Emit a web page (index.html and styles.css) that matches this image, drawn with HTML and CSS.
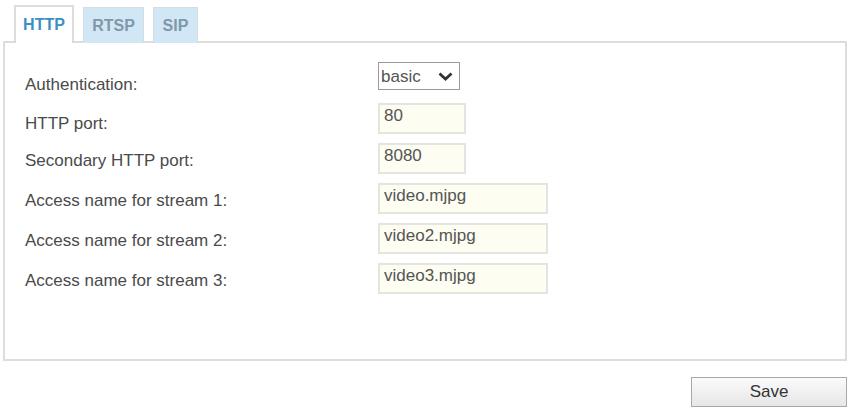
FILE: index.html
```html
<!DOCTYPE html>
<html lang="en">
<head>
    <meta charset="UTF-8">
    <meta name="viewport" content="width=device-width, initial-scale=1.0">
    <title>Network - HTTP</title>
    <link rel="stylesheet" href="styles.css">
</head>
<body>
    <div class="page">
        <div class="tabs">
            <a href="#" class="tab active">HTTP</a>
            <a href="#" class="tab">RTSP</a>
            <a href="#" class="tab">SIP</a>
        </div>

        <form class="panel">
            <div class="form-grid">
                <label class="label label-drop" for="auth">Authentication:</label>
                <div class="select-wrap">
                    <select id="auth" class="select">
                        <option>basic</option>
                        <option>digest</option>
                    </select>
                    <svg class="chevron" width="15" height="9" viewBox="0 0 15 9">
                        <path d="M1.5 1.5 L7.5 7 L13.5 1.5" fill="none" stroke="#333" stroke-width="2.8"/>
                    </svg>
                </div>

                <label class="label label-mid" for="port">HTTP port:</label>
                <input id="port" class="input short" type="text" value="80">

                <label class="label" for="port2">Secondary HTTP port:</label>
                <input id="port2" class="input short" type="text" value="8080">

                <label class="label" for="s1">Access name for stream 1:</label>
                <input id="s1" class="input" type="text" value="video.mjpg">

                <label class="label" for="s2">Access name for stream 2:</label>
                <input id="s2" class="input" type="text" value="video2.mjpg">

                <label class="label" for="s3">Access name for stream 3:</label>
                <input id="s3" class="input" type="text" value="video3.mjpg">
            </div>
        </form>

        <div class="actions">
            <button type="button" class="save-button">Save</button>
        </div>
    </div>
</body>
</html>
```

FILE: styles.css
```css
* {
    margin: 0;
    padding: 0;
    box-sizing: border-box;
}

body {
    font-family: 'Liberation Sans', Arial, sans-serif;
    color: #444;
    background: #fff;
}

.page {
    width: 844px;
    margin-left: 3px;
    padding-top: 7px;
}

/* tab strip */
.tabs {
    display: flex;
    gap: 9px;
    padding-left: 11px;
    margin-bottom: -2px;
}

.tab {
    display: flex;
    align-items: center;
    justify-content: center;
    height: 36px;
    padding: 0 8px;
    font-size: 16px;
    font-weight: bold;
    text-decoration: none;
    color: #7f98a9;
    background: #d2e7f6;
    border: 1px solid #d5dde3;
    border-bottom: none;
}

.tab.active {
    width: 60px;
    color: #3a91c1;
    background: #fff;
    border: 2px solid #ddd;
    border-bottom: none;
    position: relative;
    z-index: 1;
    height: 38px;
    margin-top: -2px;
}

.tab:nth-child(2) {
    width: 61px;
}

.tab:nth-child(3) {
    width: 45px;
}

/* settings panel */
.panel {
    border: 2px solid #ddd;
    padding: 19px 20px 0;
    height: 320px;
}

.form-grid {
    display: grid;
    grid-template-columns: 353px 1fr;
    grid-template-rows: 32px repeat(5, 31px);
    row-gap: 9px;
}

.label {
    display: flex;
    align-items: center;
    padding-top: 4px;
    font-size: 17px;
    color: #4a4a4a;
}

.label-drop {
    padding-top: 14px;
}

.label-mid {
    padding-top: 10px;
}

.select-wrap {
    position: relative;
    width: 82px;
    height: 28px;
}

.select {
    appearance: none;
    width: 100%;
    height: 100%;
    border: 1px solid #9a9a9a;
    background: #fff;
    font-family: inherit;
    font-size: 17px;
    color: #555;
    padding-left: 2px;
}

.chevron {
    position: absolute;
    right: 7px;
    top: 10px;
    pointer-events: none;
}

.input {
    width: 170px;
    height: 31px;
    border: 2px solid #e4e4e0;
    background: #fdfdf2;
    font-family: inherit;
    font-size: 17px;
    color: #555;
    padding: 0 4px 5px;
}

.input.short {
    width: 88px;
}

/* footer action */
.actions {
    display: flex;
    justify-content: flex-end;
    margin-top: 16px;
}

.save-button {
    width: 156px;
    height: 30px;
    border: 1px solid #a8a8a8;
    background: linear-gradient(#fbfbfb, #e6e6e6);
    font-family: inherit;
    font-size: 17px;
    color: #333;
}
```
